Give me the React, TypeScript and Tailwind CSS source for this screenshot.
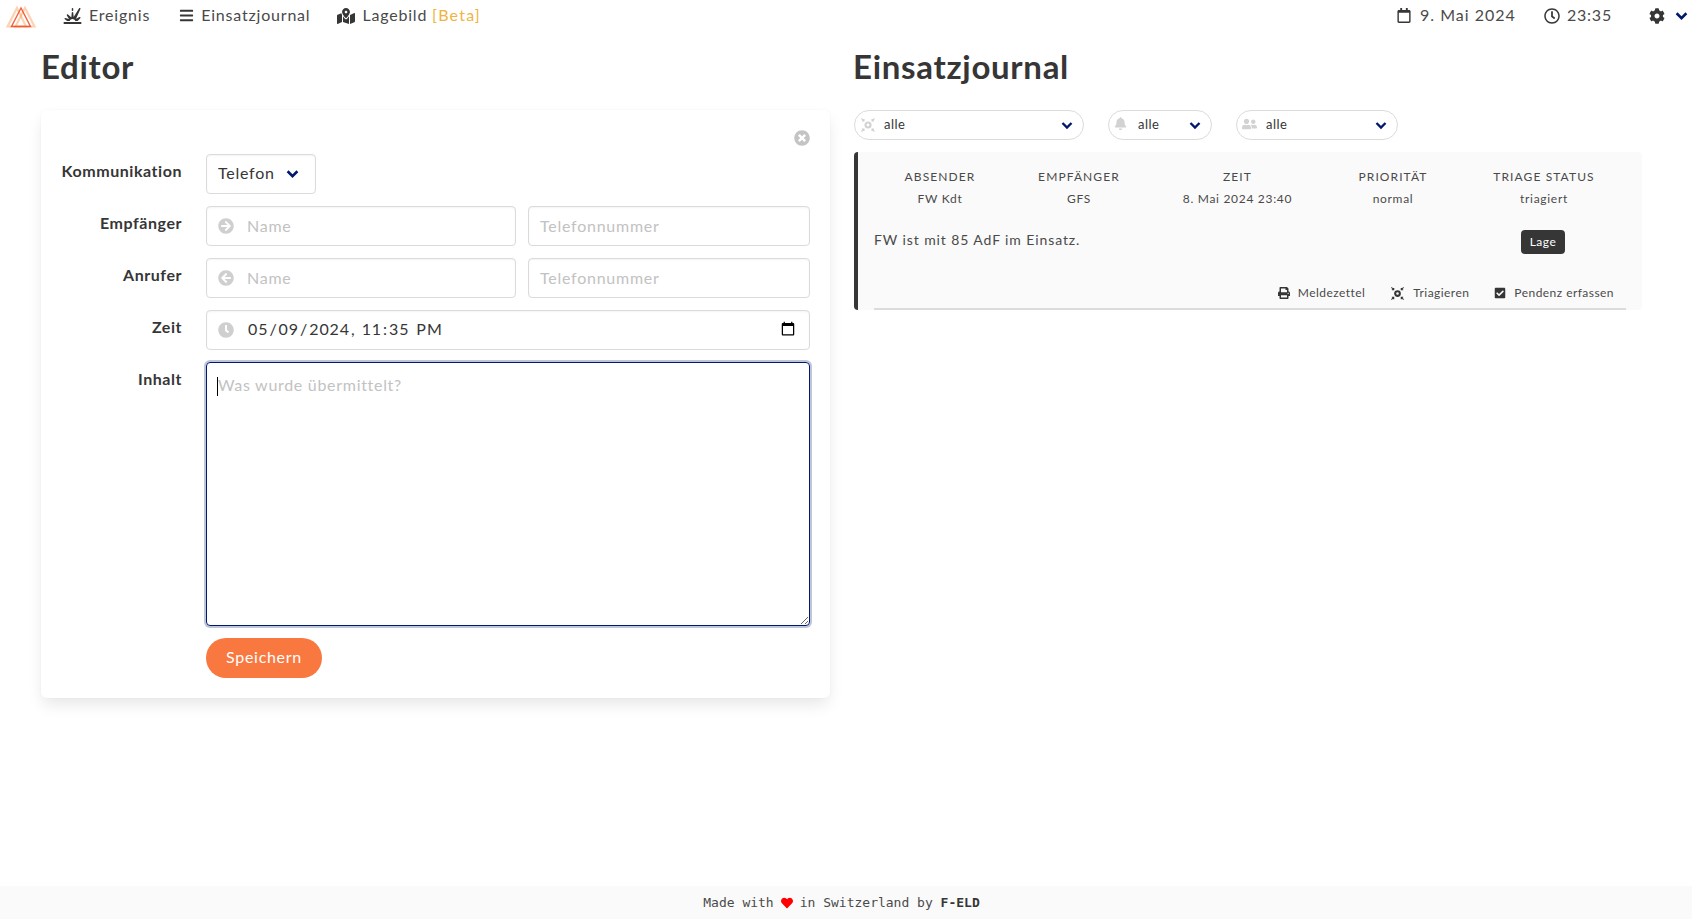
import { ReactNode } from "react";
import {
  FaArrowCircleLeft,
  FaArrowCircleRight,
  FaBars,
  FaBell,
  FaCheckSquare,
  FaClock,
  FaCog,
  FaHeart,
  FaMapMarkedAlt,
  FaPrint,
  FaRegCalendar,
  FaRegClock,
  FaTimesCircle,
  FaUserFriends,
} from "react-icons/fa";
import { FaExplosion } from "react-icons/fa6";

const FONT = "font-['Lato','Open_Sans',sans-serif]";

function Logo() {
  return (
    <svg width="30" height="24" viewBox="0 0 30 24" fill="none" className="shrink-0">
      <path d="M11 4 1.5 22.5H20Z" stroke="#fb923c" strokeOpacity="0.4" strokeWidth="2.2" />
      <path d="M19 4 9.5 22.5H28.5Z" stroke="#fb923c" strokeOpacity="0.4" strokeWidth="2.2" />
      <path d="M15 4 5.5 22.5H24.5Z" stroke="#ef4f30" strokeOpacity="0.9" strokeWidth="1.4" />
    </svg>
  );
}

function TriageIcon({ className }: { className?: string }) {
  return (
    <svg viewBox="0 0 16 16" className={className} fill="none" stroke="currentColor">
      <circle cx="8" cy="8" r="2.5" strokeWidth="2.2" />
      <path d="M1.5 1.5 4 4M4 2v2H2M14.5 1.5 12 4M12 2v2H14M1.5 14.5 4 12M4 14v-2H2M14.5 14.5 12 12M12 14v-2H14" strokeWidth="1.1" />
    </svg>
  );
}

function Chevron({ className }: { className?: string }) {
  return (
    <svg viewBox="0 0 12 9" className={className} fill="none" stroke="#00196e" strokeWidth="2.4">
      <path d="M1.5 2 6 6.5 10.5 2" />
    </svg>
  );
}

function NavItem({ icon, children }: { icon: ReactNode; children: ReactNode }) {
  return (
    <div className="flex items-center gap-[7px] text-[16px] tracking-[0.8px] text-[#4a4a4a]">
      {icon}
      <span className="-mt-[2px]">{children}</span>
    </div>
  );
}

function Navbar() {
  return (
    <nav className="flex h-[31px] items-center pl-[6px] pr-[4px]">
      <Logo />
      <div className="ml-[27px] flex items-center gap-[27px]">
        <NavItem icon={<FaExplosion className="h-[16px] w-[19px] text-[#363636]" />}>
          <span className="pr-[2px]">Ereignis</span>
        </NavItem>
        <NavItem icon={<FaBars className="h-[15px] w-[15px] text-[#363636]" />}>Einsatzjournal</NavItem>
        <NavItem icon={<FaMapMarkedAlt className="h-[16px] w-[18px] text-[#363636]" />}>
          Lagebild <span className="tracking-[1.2px] text-[#f0b341]">[Beta]</span>
        </NavItem>
      </div>
      <div className="ml-auto flex items-center">
        <div className="flex items-center gap-[9px] text-[16px] tracking-[1px] text-[#4a4a4a]">
          <FaRegCalendar className="h-[15px] w-[14px] text-[#363636]" />
          <span className="-mt-[2px]">9. Mai 2024</span>
        </div>
        <div className="ml-[28px]">
          <NavItem icon={<FaRegClock className="h-[16px] w-[16px] text-[#363636]" />}>23:35</NavItem>
        </div>
        <FaCog className="ml-[37px] h-[16px] w-[16px] text-[#363636]" />
        <Chevron className="ml-[10px] h-[10px] w-[13px]" />
      </div>
    </nav>
  );
}

function Field({ label, children }: { label: string; children: ReactNode }) {
  return (
    <div className="flex">
      <label className="w-[140px] shrink-0 pt-[5px] text-right text-[16px] leading-[24px] font-bold tracking-[0.55px] text-[#363636]">
        {label}
      </label>
      <div className="ml-[24px] flex min-w-0 flex-1 gap-[12px]">{children}</div>
    </div>
  );
}

const inputClass =
  "h-[40px] rounded-[4px] border border-[#dbdbdb] bg-white pb-[2px] text-[16px] text-[#363636] outline-none placeholder:text-[#c2c2c2] shadow-[inset_0_1px_2px_rgba(10,10,10,0.05)]";

function IconInput({ icon, placeholder }: { icon: ReactNode; placeholder: string }) {
  return (
    <div className="relative w-[310px] shrink-0">
      <span className="absolute top-[12px] left-[12px] text-[#cfcfcf]">{icon}</span>
      <input className={`${inputClass} w-full pl-[40px] tracking-[0.75px]`} placeholder={placeholder} />
    </div>
  );
}

function EditorForm() {
  return (
    <div className="relative rounded-[6px] bg-white pt-[44px] pr-[20px] pb-[20px] pl-[1px] shadow-[0_8px_16px_-2px_rgba(10,10,10,0.1),0_0_0_1px_rgba(10,10,10,0.01)]">
      <FaTimesCircle className="absolute top-[20px] right-[20px] h-[16px] w-[16px] text-[#c4c4c4]" />
      <div className="flex flex-col gap-[12px]">
        <Field label="Kommunikation">
          <div className="relative w-[110px]">
            <select className={`${inputClass} w-full appearance-none pl-[11px] tracking-[0.75px]`} defaultValue="Telefon">
              <option>Telefon</option>
            </select>
            <Chevron className="pointer-events-none absolute top-[15px] right-[17px] h-[10px] w-[13px]" />
          </div>
        </Field>
        <Field label="Empfänger">
          <IconInput icon={<FaArrowCircleRight className="h-[16px] w-[16px]" />} placeholder="Name" />
          <input className={`${inputClass} min-w-0 flex-1 px-[11px] tracking-[0.75px]`} placeholder="Telefonnummer" />
        </Field>
        <Field label="Anrufer">
          <IconInput icon={<FaArrowCircleLeft className="h-[16px] w-[16px]" />} placeholder="Name" />
          <input className={`${inputClass} min-w-0 flex-1 px-[11px] tracking-[0.75px]`} placeholder="Telefonnummer" />
        </Field>
        <Field label="Zeit">
          <div className="relative w-full">
            <span className="absolute top-[12px] left-[12px] text-[#cfcfcf]">
              <FaClock className="h-[16px] w-[16px]" />
            </span>
            <input
              type="datetime-local"
              defaultValue="2024-05-09T23:35"
              className={`${inputClass} w-full pr-[11px] pl-[40px] tracking-[0.93px]`}
            />
          </div>
        </Field>
        <Field label="Inhalt">
          <div className="relative w-full">
            <textarea
              placeholder="Was wurde übermittelt?"
              className="block h-[264px] w-full rounded-[4px] border border-[#00196e] px-[11px] py-[10px] text-[16px] leading-[24px] tracking-[0.7px] text-[#363636] outline-none shadow-[0_0_0_2px_rgba(0,25,110,0.25)] placeholder:text-[#c2c2c2]"
            />
            <span className="absolute top-[15px] left-[11px] h-[19px] w-px bg-black" />
          </div>
        </Field>
        <Field label="">
          <button className="h-[40px] w-[116px] rounded-full bg-[#f97840] pb-[2px] text-[16px] tracking-[0.7px] text-white">
            Speichern
          </button>
        </Field>
      </div>
    </div>
  );
}

function FilterPill({ icon, width }: { icon: ReactNode; width: string }) {
  return (
    <div className={`relative h-[30px] ${width}`}>
      <span className="absolute top-[7px] left-[6px] text-[#d2d2d2]">{icon}</span>
      <select
        defaultValue="alle"
        className="h-full w-full appearance-none rounded-full border border-[#dbdbdb] bg-white pl-[29px] text-[13px] tracking-[0.5px] text-[#363636] outline-none"
      >
        <option>alle</option>
      </select>
      <Chevron className="pointer-events-none absolute top-[11px] right-[11px] h-[9px] w-[12px]" />
    </div>
  );
}

function InfoCol({ title, value, width }: { title: string; value: string; width: string }) {
  return (
    <div className={`flex shrink-0 flex-col items-center text-center ${width}`}>
      <span className="text-[12px] leading-[18px] tracking-[1.1px] text-[#4a4a4a] uppercase">{title}</span>
      <span className="mt-[4px] text-[12px] leading-[18px] tracking-[0.7px] text-[#4a4a4a]">{value}</span>
    </div>
  );
}

function Action({ icon, label }: { icon: ReactNode; label: string }) {
  return (
    <span className="flex items-center gap-[8px] text-[12px] tracking-[0.45px] text-[#4a4a4a]">
      {icon}
      {label}
    </span>
  );
}

function JournalEntry() {
  return (
    <div className="mt-[12px] h-[158px] rounded-[4px] border-l-[4px] border-[#363636] bg-[#fafafa] pt-[16px] pl-[16px] text-[#4a4a4a]">
      <div className="flex">
        <InfoCol title="Absender" value="FW Kdt" width="w-[132px]" />
        <InfoCol title="Empfänger" value="GFS" width="w-[146px]" />
        <InfoCol title="Zeit" value="8. Mai 2024 23:40" width="w-[171px]" />
        <InfoCol title="Priorität" value="normal" width="w-[140px]" />
        <InfoCol title="Triage Status" value="triagiert" width="w-[162px]" />
      </div>
      <div className="mt-[22px] flex items-start">
        <p className="-mt-[1px] w-[588px] shrink-0 text-[14px] leading-[21px] tracking-[0.9px]">FW ist mit 85 AdF im Einsatz.</p>
        <div className="flex w-[162px] justify-center">
          <span className="flex h-[24px] items-center rounded-[4px] bg-[#363636] px-[9px] text-[12px] tracking-[0.5px] text-white">Lage</span>
        </div>
      </div>
      <div className="mt-[30px] mr-[16px] flex h-[26px] items-start justify-end gap-[25px] border-b-2 border-[#dbdbdb] pr-[12px]">
        <Action icon={<FaPrint className="h-[12px] w-[12px] text-[#363636]" />} label="Meldezettel" />
        <Action icon={<TriageIcon className="h-[15px] w-[15px] text-[#363636]" />} label="Triagieren" />
        <Action icon={<FaCheckSquare className="h-[12px] w-[12px] text-[#363636]" />} label="Pendenz erfassen" />
      </div>
    </div>
  );
}

export default function App() {
  return (
    <div className={`flex min-h-[919px] flex-col bg-white ${FONT}`}>
      <Navbar />
      <main className="flex flex-1 gap-[24px] pr-[50px] pl-[41px]">
        <section className="w-[789px] shrink-0">
          <h1 className="mt-[15px] h-[64px] text-[33px] leading-[40px] font-bold tracking-[0.7px] text-[#363636]">Editor</h1>
          <EditorForm />
        </section>
        <section className="min-w-0 flex-1">
          <h1 className="mt-[15px] -ml-[1px] h-[64px] text-[33px] leading-[40px] font-bold tracking-[0.7px] text-[#363636]">Einsatzjournal</h1>
          <div className="flex gap-[24px]">
            <FilterPill icon={<TriageIcon className="h-[16px] w-[16px]" />} width="w-[230px]" />
            <FilterPill icon={<FaBell className="h-[13px] w-[13px]" />} width="w-[104px]" />
            <FilterPill icon={<FaUserFriends className="h-[14px] w-[15px]" />} width="w-[162px]" />
          </div>
          <JournalEntry />
        </section>
      </main>
      <footer className="flex h-[33px] items-center justify-center bg-[#fafafa] pr-[9px] font-['DejaVu_Sans_Mono',monospace] text-[13px] text-[#4a4a4a]">
        Made with <FaHeart className="mx-[7px] h-[12px] w-[12px] text-[#ff0000]" /> in Switzerland by&nbsp;<b className="text-[#363636]">F-ELD</b>
      </footer>
    </div>
  );
}
